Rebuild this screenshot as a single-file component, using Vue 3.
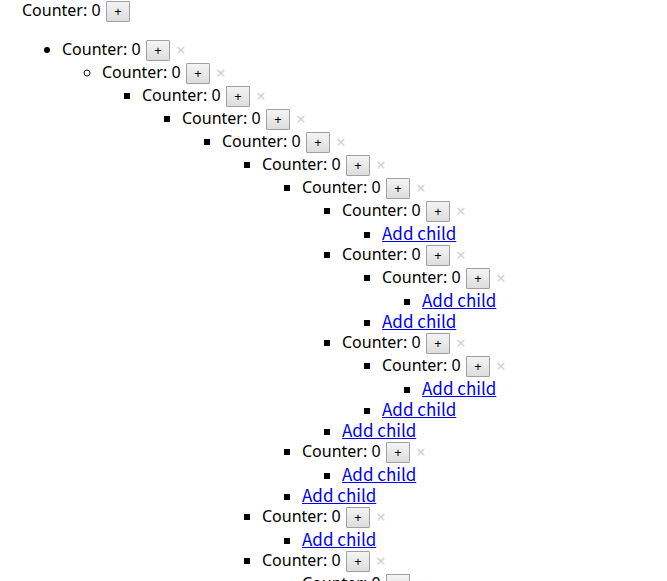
<script setup>
import { reactive } from 'vue'

const branch = (...children) => ({ count: 0, children })

const createTree = () =>
  branch(branch(branch(branch(branch(branch(
    branch(
      branch(
        branch(),
        branch(branch()),
        branch(branch())
      ),
      branch()
    ),
    branch(),
    branch(branch())
  ))))))

const props = defineProps({
  node: { type: Object, default: null },
  nested: Boolean
})
const emit = defineEmits(['remove'])

const current = props.node ?? reactive(createTree())

function addChild() {
  current.children.push(branch())
}
function removeChild(index) {
  current.children.splice(index, 1)
}
</script>

<template>
  <div class="node" :class="{ root: !nested }">
    <div class="row">
      <span class="label">Counter: {{ current.count }}</span>
      <button type="button" class="increment" @click="current.count++">+</button>
      <button v-if="nested" type="button" class="remove" aria-label="Remove" @click="emit('remove')">×</button>
    </div>
    <ul class="children">
      <li v-for="(child, index) in current.children" :key="index">
        <App :node="child" nested @remove="removeChild(index)" />
      </li>
      <li class="add"><a href="#" @click.prevent="addChild">Add child</a></li>
    </ul>
  </div>
</template>

<style>
body {
  margin: 0;
  background: #fff;
}
</style>

<style scoped>
.node {
  font: 16px/21px "Noto Sans", sans-serif;
  color: #000;
}
.root {
  padding-left: 22px;
}
.row {
  display: flex;
  align-items: flex-start;
  height: 23px;
  white-space: nowrap;
}
.label {
  min-width: 80px;
  margin-right: 4px;
}
.children {
  margin: 0;
  padding-left: 40px;
}
.root > .children {
  margin: 16px 0;
}
.add {
  padding-bottom: 2px;
  font: 17px/19px "Noto Sans CJK SC", sans-serif;
}
.add::marker {
  font: 16px/19px "Noto Sans", sans-serif;
}
a {
  color: #00e;
  text-decoration: underline;
}
.increment {
  box-sizing: border-box;
  width: 24px;
  height: 21px;
  margin: 1px 0;
  padding: 0;
  border: 1px solid #a0a0a0;
  border-radius: 1px;
  background: linear-gradient(#f4f4f4, #dddddd);
  color: #000;
  font: 13px/17px "Noto Sans", sans-serif;
}
.remove {
  margin: 0 0 0 6px;
  padding: 0;
  border: 0;
  background: none;
  color: #cfcfcf;
  font: 17px/21px "Noto Sans", sans-serif;
}
</style>
